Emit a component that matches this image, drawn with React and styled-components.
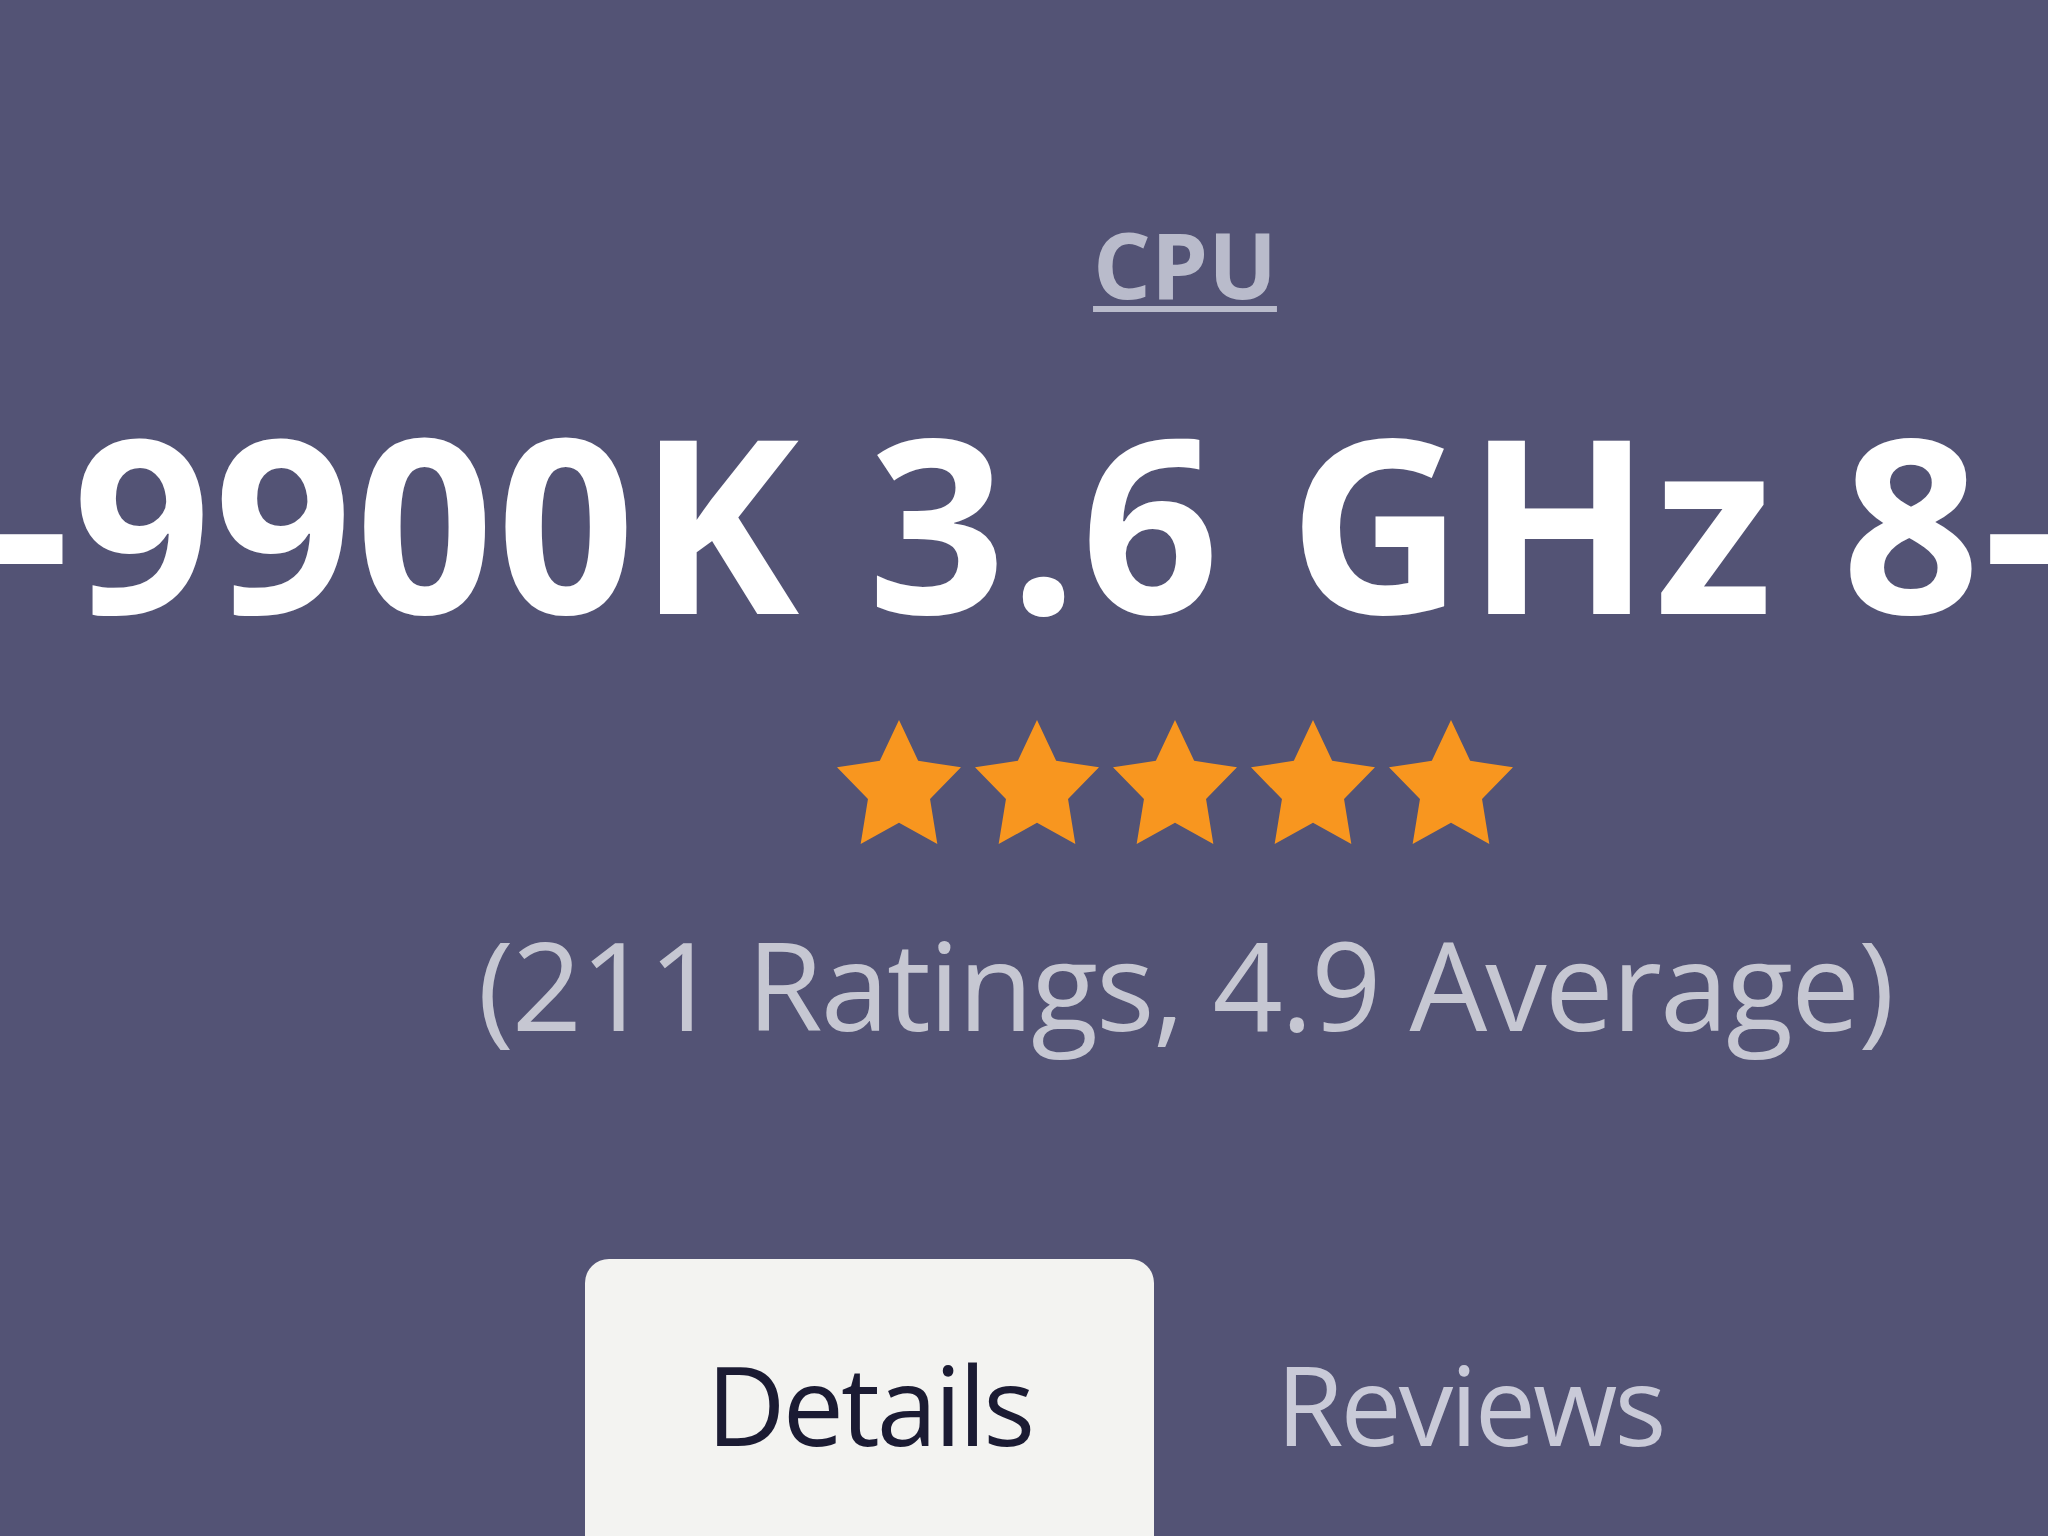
import React from "react";
import styled, { createGlobalStyle } from "styled-components";

const Global = createGlobalStyle`
  html, body {
    margin: 0;
    padding: 0;
    background: #535375;
    overflow: hidden;
  }
  body {
    font-family: "Open Sans", "Noto Sans", sans-serif;
  }
`;

const Page = styled.div`
  width: 2370px;
  height: 1536px;
  background: #535375;
  display: flex;
  flex-direction: column;
  align-items: center;
  padding-top: 219px;
  box-sizing: border-box;
`;

const Category = styled.a`
  font-size: 91px;
  line-height: 1;
  font-weight: 700;
  color: #b9bbcb;
  text-decoration: underline;
  text-decoration-thickness: 6px;
  text-underline-offset: 7px;
  cursor: pointer;
`;

const TitleRow = styled.div`
  width: 100%;
  display: flex;
  justify-content: center;
  margin-top: 89px;
`;

const Title = styled.h1`
  margin: 0 0 0 32px;
  flex: none;
  white-space: nowrap;
  font-size: 242px;
  line-height: 1;
  font-weight: 700;
  letter-spacing: 3px;
  color: #ffffff;
`;

const Stars = styled.div`
  display: flex;
  gap: 14px;
  margin: 79px 20px 0 0;
`;

const StarSvg = styled.svg`
  width: 124px;
  height: 124px;
  display: block;
  fill: #f8961f;
`;

const Ratings = styled.div`
  margin-top: 78px;
  font-size: 123px;
  line-height: 1;
  font-weight: 400;
  letter-spacing: -2px;
  color: #c6c7d2;
  white-space: nowrap;
`;

const Tabs = styled.div`
  display: flex;
  margin-top: 214px;
`;

const Tab = styled.button`
  border: none;
  margin: 0;
  font-family: inherit;
  font-size: 109px;
  line-height: 1;
  letter-spacing: -3px;
  padding: 90px 122px 200px;
  border-radius: 24px 24px 0 0;
  cursor: pointer;
  background: ${(p) => (p.$active ? "#f3f3f1" : "transparent")};
  color: ${(p) => (p.$active ? "#1b1b33" : "#c9cad8")};
`;

const Star = () => (
  <StarSvg viewBox="2.45 0 95.1 90.45" preserveAspectRatio="none">
    <polygon points="50,0 64.7,29.8 97.55,34.55 73.8,57.7 79.4,90.45 50,75 20.6,90.45 26.2,57.7 2.45,34.55 35.3,29.8" />
  </StarSvg>
);

export default function App() {
  return (
    <>
      <Global />
      <Page>
        <Category>CPU</Category>
        <TitleRow>
          <Title>Intel Core i9-9900K 3.6 GHz 8-Core Processor</Title>
        </TitleRow>
        <Stars>
          {[0, 1, 2, 3, 4].map((i) => (
            <Star key={i} />
          ))}
        </Stars>
        <Ratings>(211 Ratings, 4.9 Average)</Ratings>
        <Tabs>
          <Tab $active>Details</Tab>
          <Tab>Reviews</Tab>
        </Tabs>
      </Page>
    </>
  );
}
